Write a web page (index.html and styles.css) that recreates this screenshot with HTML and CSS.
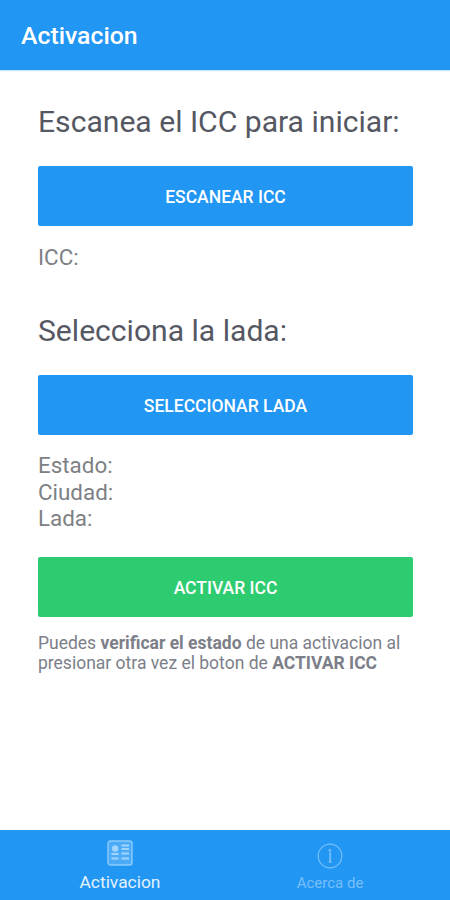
FILE: index.html
```html
<!DOCTYPE html>
<html lang="es">
<head>
<meta charset="utf-8">
<title>Activacion</title>
<link rel="stylesheet" href="styles.css">
</head>
<body>
<header class="appbar">Activacion</header>
<main class="content">
  <h1 class="title">Escanea el ICC para iniciar:</h1>
  <button class="btn">ESCANEAR ICC</button>
  <p class="info info-icc">ICC:</p>
  <h1 class="title">Selecciona la lada:</h1>
  <button class="btn">SELECCIONAR LADA</button>
  <p class="info info-lada">Estado:<br>Ciudad:<br>Lada:</p>
  <button class="btn btn-green">ACTIVAR ICC</button>
  <p class="note">Puedes <b>verificar el estado</b> de una activacion al<br>presionar otra vez el boton de <b>ACTIVAR ICC</b></p>
</main>
<nav class="tabs">
  <a class="tab active">
    <svg class="icon" width="26" height="26" viewBox="0 0 26 26" fill="none" stroke="#8dcbfb" stroke-width="1.4">
      <rect x="1" y="1" width="24" height="24" rx="2.5" fill="#4babf7"/>
      <circle cx="8.2" cy="8.5" r="3.2" fill="#a3d5fc" stroke="none"/>
      <path d="M14.5 5.5H22M14.5 9H22M14.5 13.5H22M4.5 14H11.5M4.5 18.5H11.5M14.5 18.5H22" stroke="#a3d5fc" stroke-width="2"/>
    </svg>
    <span class="label">Activacion</span>
  </a>
  <a class="tab">
    <svg class="icon" width="26" height="26" viewBox="0 0 26 26" fill="none" stroke="#77bffa" stroke-width="1.2">
      <circle cx="13" cy="13" r="11.8"/>
      <path d="M12 10.3H13.2V18.6M11.8 18.8H14.6" stroke-width="1.8"/>
      <circle cx="12.9" cy="7.4" r="1.4" fill="#77bffa" stroke="none"/>
    </svg>
    <span class="label">Acerca de</span>
  </a>
</nav>
</body>
</html>
```
FILE: styles.css
```css
* { box-sizing: border-box; margin: 0; }
body { height: 900px; display: flex; flex-direction: column; background: #fff; font-family: Roboto, sans-serif; color: #7d8084; }
.appbar { height: 70px; background: #2196f3; color: #fff; font-size: 24.8px; font-weight: 500; line-height: 72px; padding-left: 21px; box-shadow: 0 1px 1px #2196f340; }
.content { flex: 1; padding: 32px 37px 0 38px; }
.title { font-size: 30.1px; line-height: 40px; font-weight: 400; color: #555863; margin-bottom: 24px; white-space: nowrap; }
.btn { display: block; width: 100%; height: 60px; border: 0; border-radius: 2px; background: #2196f3; color: #fff; font: 500 17.5px Roboto, sans-serif; padding: 2px 0 0; }
.btn-green { background: #2ecc71; }
.info { font-size: 22.4px; line-height: 26.3px; }
.info-icc { margin: 18px 0 40.7px; }
.info-lada { margin: 17.3px 0 25.8px; }
.note { font-size: 17.5px; line-height: 20.5px; margin-top: 16px; white-space: nowrap; color: #7c7e88; }
.tabs { height: 70px; display: flex; padding: 0 15px; background: #2196f3; color: #77bffa; }
.tab { flex: 1; display: flex; flex-direction: column; align-items: center; padding-top: 13px; font-size: 15px; }
.label { line-height: 20px; margin-top: 4px; }
.active { padding-top: 10px; color: #e2f2fe; font-size: 17.4px; }
.active .label { margin-top: 6px; }
```
